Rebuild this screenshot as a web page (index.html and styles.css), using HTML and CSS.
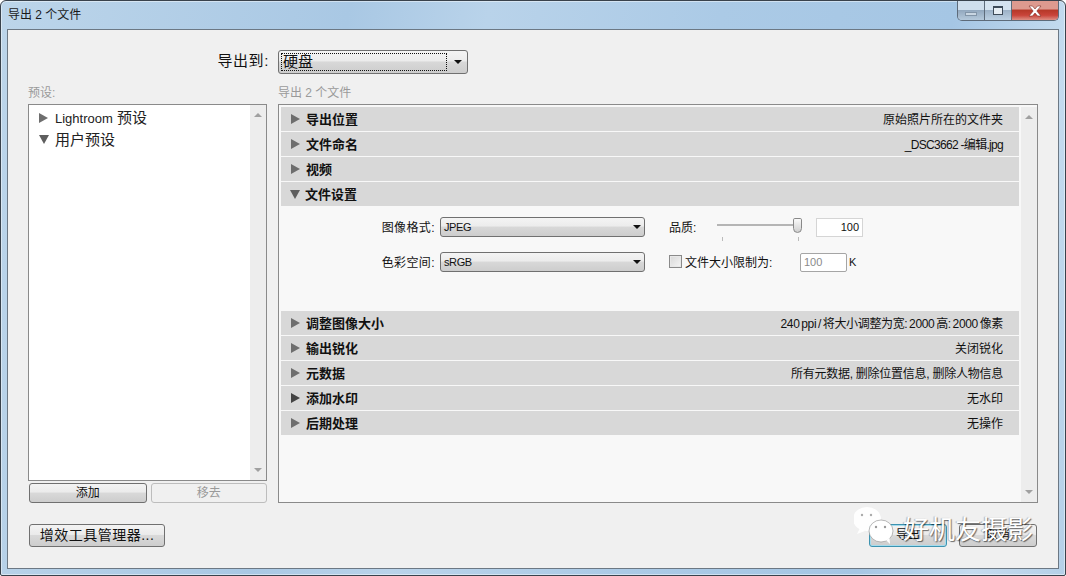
FILE: index.html
```html
<!DOCTYPE html>
<html lang="zh">
<head>
<meta charset="utf-8">
<title>导出 2 个文件</title>
<link rel="stylesheet" href="styles.css">
</head>
<body>
<div class="window">
  <header class="titlebar">
    <span class="title">导出 2 个文件</span>
    <div class="controls">
      <span class="ctl ctl-min"><i></i></span>
      <span class="ctl ctl-max"><i></i></span>
      <span class="ctl ctl-close"><svg width="16" height="12" viewBox="0 0 16 12"><path d="M2 1h3.500L8 4l2.500-3H14l-4.200 5L14 11h-3.500L8 8l-2.500 3H2l4.200-5z" fill="#fff" stroke="#7a2a22" stroke-width=".6"/></svg></span>
    </div>
  </header>
  <main class="client">
    <div class="dest">
      <span class="dest-label">导出到:</span>
      <div class="select select-dest"><span class="focus">硬盘</span><b class="arrow"></b></div>
    </div>
    <div class="columns">
      <aside class="presets">
        <div class="cap">预设:</div>
        <div class="listbox">
          <ul class="tree">
            <li><b class="tri-r"></b><span><span class="lat">Lightroom</span> 预设</span></li>
            <li><b class="tri-d"></b><span>用户预设</span></li>
          </ul>
          <div class="scroll"><b class="up"></b><b class="down"></b></div>
        </div>
        <div class="preset-btns">
          <span class="btn">添加</span>
          <span class="btn btn-off">移去</span>
        </div>
      </aside>
      <section class="settings">
        <div class="cap">导出 2 个文件</div>
        <div class="panel">
          <div class="sections">
            <div class="row"><b class="tri-r"></b><strong>导出位置</strong><span>原始照片所在的文件夹</span></div>
            <div class="row"><b class="tri-r"></b><strong>文件命名</strong><span class="name">_DSC3662 -编辑.jpg</span></div>
            <div class="row"><b class="tri-r"></b><strong>视频</strong></div>
            <div class="row"><b class="tri-d"></b><strong>文件设置</strong></div>
            <div class="body">
              <div class="form-line">
                <label class="f-label">图像格式:</label>
                <div class="select select-form"><span>JPEG</span><b class="arrow"></b></div>
                <label class="q-label">品质:</label>
                <div class="slider"><div class="track"></div><div class="thumb"></div><i class="tick t1"></i><i class="tick t2"></i></div>
                <div class="num">100</div>
              </div>
              <div class="form-line">
                <label class="f-label">色彩空间:</label>
                <div class="select select-form"><span>sRGB</span><b class="arrow"></b></div>
                <span class="check"></span>
                <label class="limit">文件大小限制为:</label>
                <div class="num num-off">100</div>
                <span class="unit">K</span>
              </div>
            </div>
            <div class="row"><b class="tri-r"></b><strong>调整图像大小</strong><span class="tight">240 ppi / 将大小调整为宽: 2000 高: 2000 像素</span></div>
            <div class="row"><b class="tri-r"></b><strong>输出锐化</strong><span>关闭锐化</span></div>
            <div class="row"><b class="tri-r"></b><strong>元数据</strong><span class="meta">所有元数据, 删除位置信息, 删除人物信息</span></div>
            <div class="row"><b class="tri-r dark"></b><strong>添加水印</strong><span>无水印</span></div>
            <div class="row"><b class="tri-r"></b><strong>后期处理</strong><span>无操作</span></div>
          </div>
          <div class="scroll"><b class="up"></b><b class="down"></b></div>
        </div>
      </section>
    </div>
    <footer class="foot">
      <span class="btn btn-plugin">增效工具管理器...</span>
      <div class="foot-right">
        <span class="btn btn-main">导出</span>
        <span class="btn btn-cancel">取消</span>
      </div>
    </footer>
    <div class="watermark">
      <svg class="wx" width="60" height="44" viewBox="0 0 60 44">
        <ellipse cx="13" cy="14" rx="14" ry="12" fill="#fff" opacity=".92"/>
        <path d="M6 23l-3 6 8-3z" fill="#fff" opacity=".92"/>
        <ellipse cx="27" cy="26" rx="12" ry="11" fill="#fff" stroke="#8a8a8a" stroke-width=".6"/>
        <path d="M32 35l4 4-.5-6z" fill="#fff"/>
        <circle cx="8" cy="10" r="1.200" fill="#aaa"/><circle cx="17" cy="10" r="1.200" fill="#aaa"/>
        <circle cx="22" cy="22" r="1.200" fill="#999"/><circle cx="31" cy="22" r="1.200" fill="#999"/>
      </svg>
      <span class="wm-text">好机友摄影</span>
    </div>
  </main>
</div>
</body>
</html>
```
FILE: styles.css
```css
* { box-sizing: border-box; }
html, body { margin: 0; padding: 0; }
body {
  width: 1066px; height: 576px; overflow: hidden;
  font-family: "Liberation Sans", "Noto Sans CJK SC", sans-serif;
  font-size: 12px; color: #111; background: #fff;
}
ul { list-style: none; margin: 0; padding: 0; }
.window {
  width: 1066px; height: 576px; display: flex; flex-direction: column;
  background: linear-gradient(100deg, #bcd5ea 0%, #a9c8e4 30%, #b9d3ea 42%, #abcae6 62%, #a5c6e4 82%, #c4dbef 92%, #b5d0e8 100%);
  border: 1px solid #39424c; border-radius: 6px 6px 2px 2px;
  box-shadow: inset 0 0 0 1px rgba(255,255,255,.45);
}
.titlebar { height: 28px; flex: none; display: flex; align-items: flex-start; padding-left: 7px; }
.title { font-size: 12px; line-height: 28px; color: #1a1a1a; }
.controls { margin-left: auto; margin-right: 6px; display: flex; height: 20px; border: 1px solid #5d6b7a; border-top: 0; border-radius: 0 0 5px 5px; overflow: hidden; }
.ctl { display: flex; align-items: center; justify-content: center; height: 19px; }
.ctl-min { width: 27px; background: linear-gradient(#cfdeec 0 50%, #93a9bf 50%, #b5c9db); border-right: 1px solid #5d6b7a; }
.ctl-min i { width: 12px; height: 4px; margin-top: 6px; background: #c9d6e2; border: 1px solid #8295a8; }
.ctl-max { width: 27px; background: linear-gradient(#d5e3f0 0 50%, #9db2c7 50%, #bcd0e2); border-right: 1px solid #5d6b7a; }
.ctl-max i { width: 10px; height: 9px; border: 1px solid #3e4b59; border-top-width: 2px; background: #e6edf3; }
.ctl-close { width: 46px; background: linear-gradient(#dd9a8f 0 40%, #b7392a 50%, #c9443a 75%, #dd8f85); }
.client {
  position: relative; flex: 1; margin: 0 6px 6px; background: #f0f0f0;
  border: 1px solid #6c7884; padding: 20px 20px 0 20px; display: flex; flex-direction: column;
}
.dest { height: 25px; display: flex; align-items: flex-start; }
.dest-label { width: 253px; text-align: right; font-size: 15px; line-height: 21px; letter-spacing: .6px; padding-right: 9px; margin-left: -3px; color: #111; flex: none; }
.select {
  display: flex; align-items: center; border: 1px solid #707070; border-radius: 3px;
  background: linear-gradient(#f4f4f4, #ececec 45%, #d8d8d8 50%, #cdcdcd);
}
.select-dest { width: 190px; height: 24px; padding: 2px; font-size: 15px; }
.focus { flex: 1; height: 18px; line-height: 15px; border: 1px dotted #111; padding-left: 1px; margin-right: 7px; }
.arrow { width: 0; height: 0; border: 4px solid transparent; border-top: 4px solid #111; border-bottom: 0; flex: none; margin-right: 3px; }
.columns { display: flex; margin-top: 9px; flex: none; }
.cap { height: 20px; font-size: 12px; color: #9a9a9a; line-height: 18px; }
.presets { width: 239px; margin-right: 11px; }
.listbox { height: 377px; width: 239px; background: #fff; border: 1px solid #8a8a8a; display: flex; }
.tree { flex: 1; padding: 2px 0 0 10px; font-size: 15px; color: #222; }
.tree li { height: 21.500px; line-height: 21px; display: flex; align-items: center; gap: 7px; white-space: pre; }
.lat { font-size: 13px; }
.tri-r, .tri-d { display: inline-block; width: 0; height: 0; flex: none; }
.tri-r { border-left: 9px solid #6e6e6e; border-top: 5px solid transparent; border-bottom: 5px solid transparent; }
.tri-r.dark { border-left-color: #444; }
.tri-d { border-top: 9px solid #5e5e5e; border-left: 5px solid transparent; border-right: 5px solid transparent; margin-right: -1px; }
.scroll { width: 16px; flex: none; background: #ededed; display: flex; flex-direction: column; justify-content: space-between; align-items: center; padding: 8px 0; }
.up, .down { display: block; width: 0; height: 0; border-left: 4px solid transparent; border-right: 4px solid transparent; }
.up { border-bottom: 4px solid #a0a0a0; }
.down { border-top: 4px solid #a0a0a0; }
.preset-btns { display: flex; gap: 4px; margin-top: 2px; margin-left: 1px; }
.preset-btns .btn { width: 118px; height: 20px; line-height: 18px; }
.btn {
  display: inline-block; text-align: center; border: 1px solid #707070; border-radius: 3px;
  background: linear-gradient(#f3f3f3, #ebebeb 45%, #d9d9d9 50%, #cdcdcd); color: #111; font-size: 12px;
}
.preset-btns .btn-off { background: #f0f0f0; border-color: #bdbdbd; color: #9a9a9a; width: 117px; }
.settings { width: 760px; }
.panel { height: 399px; background: #f8f8f8; border: 1px solid #8a8a8a; display: flex; padding-top: 2px; }
.sections { width: 738px; margin-left: 2px; margin-right: 2px; }
.row { height: 24px; margin-bottom: 1px; background: #d8d8d8; display: flex; align-items: center; padding: 0 16px 0 10px; }
.row strong { font-size: 13px; margin: -2px 0 0 6px; color: #111; }
.row .tri-d { margin-left: -1px; }
.row span { margin: -2px 0 0 auto; font-size: 12px; color: #111; }
.row .tight { letter-spacing: -.35px; word-spacing: -1.2px; }
.row .meta { letter-spacing: -.25px; }
.row .name { letter-spacing: -.7px; }
.body { height: 104px; padding-top: 7px; }
.form-line { height: 25px; margin-bottom: 10px; display: flex; align-items: center; font-size: 12px; }
.f-label { width: 159px; text-align: right; padding-right: 5px; flex: none; letter-spacing: .4px; }
.select-form { width: 205px; height: 20px; font-size: 11px; padding-left: 3px; justify-content: space-between; letter-spacing: -.4px; }
.q-label { margin-left: 24px; width: 48px; }
.slider { position: relative; width: 90px; height: 25px; margin-right: 9px; flex: none; }
.track { position: absolute; left: 0; right: 6px; top: 10px; height: 2px; background: #b5b5b5; }
.thumb { position: absolute; left: 76px; top: 4px; width: 9px; height: 15px; background: linear-gradient(#fafafa, #cfcfcf); border: 1px solid #888; border-radius: 2px 2px 5px 5px; }
.tick { position: absolute; top: 23px; width: 1px; height: 4px; background: #bbb; }
.t1 { left: 5px; } .t2 { left: 81px; }
.num { width: 47px; height: 19px; margin-top: 2px; background: #fff; border: 1px solid #d5d5d5; text-align: right; padding-right: 3px; font-size: 11px; line-height: 17px; }
.check { width: 13px; height: 13px; margin-left: 24px; border: 1px solid #8a8a8a; background: linear-gradient(135deg, #d8d8d8, #f5f5f5); box-shadow: inset 0 0 0 1px #e8e8e8; flex: none; }
.limit { width: 115px; margin-left: 3px; flex: none; }
.num-off { border-color: #a5a5a5; border-radius: 2px; color: #8a8a8a; text-align: left; padding-left: 3px; height: 19px; }
.unit { font-size: 11px; margin-left: 2px; }
.foot { display: flex; justify-content: space-between; align-items: flex-start; margin-top: 21px; height: 24px; padding: 0 1px; }
.btn-plugin { width: 136px; height: 23px; font-size: 14px; line-height: 20px; letter-spacing: .5px; }
.foot-right { display: flex; gap: 12px; margin-right: 0; }
.foot-right .btn { width: 78px; height: 23px; line-height: 21px; }
.btn-main { border-color: #3d93b0; box-shadow: inset 0 0 0 1px #a4dcee; }
.watermark { position: absolute; right: 25px; bottom: 19px; display: flex; align-items: center; }
.wm-text { font-size: 26px; color: #fff; margin-left: -11px; text-shadow: 1px 1px 1px rgba(0,0,0,.55), -1px 0 1px rgba(0,0,0,.25); }
```
